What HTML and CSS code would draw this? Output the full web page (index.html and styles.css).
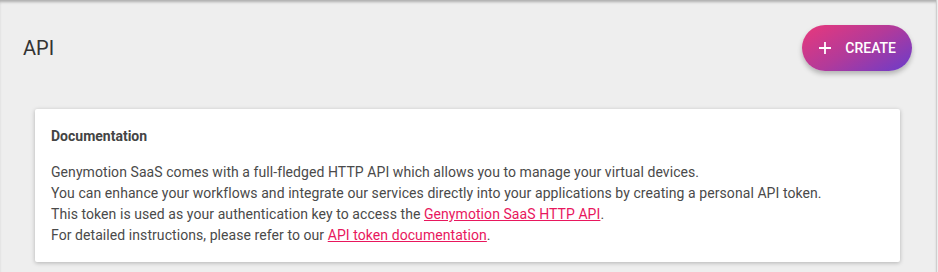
FILE: index.html
```html
<!DOCTYPE html>
<html lang="en">
<head>
    <meta charset="UTF-8">
    <meta name="viewport" content="width=device-width, initial-scale=1.0">
    <title>API</title>
    <link rel="stylesheet" href="styles.css">
</head>
<body>
    <div class="page">
        <div class="header">
            <h1>API</h1>
            <button class="create">
                <svg width="12" height="12" viewBox="0 0 12 12"><path d="M6 0v12M0 6h12" stroke="#fff" stroke-width="1.8"/></svg>
                <span>CREATE</span>
            </button>
        </div>

        <div class="card">
            <h3>Documentation</h3>
            <p>
                Genymotion SaaS comes with a full-fledged HTTP API which allows you to manage your virtual devices.<br>
                You can enhance your workflows and integrate our services directly into your applications by creating a personal API token.<br>
                This token is used as your authentication key to access the <a href="#">Genymotion SaaS HTTP API</a>.<br>
                For detailed instructions, please refer to our <a href="#">API token documentation</a>.
            </p>
        </div>
    </div>
</body>
</html>
```

FILE: styles.css
```css
* {
    margin: 0;
    padding: 0;
    box-sizing: border-box;
}
body {
    font-family: Roboto, "Liberation Sans", sans-serif;
    background: #eeeeee;
    color: #4a4a4a;
    height: 272px;
    overflow: hidden;
}
.page {
    width: 937px;
    height: 272px;
    border-right: 1px solid #cfcfcf;
    box-shadow: inset 0 3px 3px -1px rgba(0, 0, 0, 0.28);
}
.header {
    display: flex;
    justify-content: space-between;
    align-items: center;
    padding: 25px 24px 0 23px;
}
h1 {
    font-size: 20px;
    font-weight: 400;
    color: #333;
}
.create {
    display: flex;
    align-items: center;
    gap: 14px;
    height: 46px;
    padding: 0 16px 0 17px;
    border: none;
    border-radius: 23px;
    background: linear-gradient(150deg, #e9387b 0%, #b23a9a 50%, #6a3ccb 100%);
    color: #fff;
    font-family: Roboto, sans-serif;
    font-size: 14px;
    font-weight: 500;
    box-shadow: 0 3px 5px rgba(0, 0, 0, 0.25);
    cursor: pointer;
}
.card {
    margin: 38px 36px 0 35px;
    background: #fff;
    padding: 19px 16px 16px 16px;
    border-radius: 2px;
    box-shadow: 0 1px 4px rgba(0, 0, 0, 0.25);
}
.card h3 {
    font-size: 14px;
    font-weight: 700;
    color: #444;
    margin-bottom: 18px;
}
.card p {
    font-size: 14px;
    line-height: 21px;
    letter-spacing: 0.07px;
}
.card a {
    color: #e8175d;
}
```
